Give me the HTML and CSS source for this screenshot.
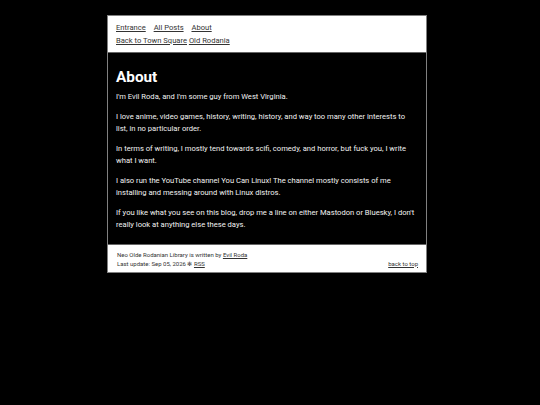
FILE: index.html
```html
<!DOCTYPE html>
<html>
<head>
<meta charset="utf-8">
<link rel="stylesheet" href="styles.css">
</head>
<body>
<div class="wrap">
  <header class="top">
    <nav class="nav">
      <a href="#">Entrance</a>
      <a href="#">All Posts</a>
      <a href="#">About</a>
    </nav>
    <nav class="nav nav2">
      <a href="#">Back to Town Square</a>
      <a href="#">Old Rodania</a>
    </nav>
  </header>
  <main class="main">
    <h1>About</h1>
    <p>I'm Evil Roda, and I'm some guy from West Virginia.</p>
    <p>I love anime, video games, history, writing, history, and way too many other interests to list, in no particular order.</p>
    <p>In terms of writing, I mostly tend towards scifi, comedy, and horror, but fuck you, I write what I want.</p>
    <p>I also run the YouTube channel You Can Linux! The channel mostly consists of me installing and messing around with Linux distros.</p>
    <p>If you like what you see on this blog, drop me a line on either Mastodon or Bluesky, I don't really look at anything else these days.</p>
  </main>
  <footer class="foot">
    <div class="foot-left">
      <div>Neo Olde Rodanian Library is written by <a href="#">Evil Roda</a></div>
      <div>Last update: Sep 05, 2026 <span class="dot">✻</span> <a href="#">RSS</a></div>
    </div>
    <a href="#" class="totop">back to top</a>
  </footer>
</div>
</body>
</html>
```
FILE: styles.css
```css
html, body {
  margin: 0;
  padding: 0;
  background: #000;
}
body {
  font-family: Roboto, "Liberation Sans", sans-serif;
  padding-top: 15px;
}
.wrap {
  width: 318px;
  margin-left: 107px;
  background: #fff;
  border: 1px solid #808080;
}
.top {
  padding: 6px 8px 5px;
  font-size: 7.6px;
  line-height: 12.5px;
}
.nav a {
  color: #333;
  margin-right: 6px;
}
.nav2 a {
  margin-right: 0;
}
.main {
  background: #000;
  color: #f2f2f2;
  border-top: 1px solid #666;
  border-bottom: 1px solid #666;
  padding: 15px 8px 12px;
  font-size: 7.6px;
  line-height: 12.5px;
}
.main h1 {
  font-size: 15.3px;
  line-height: 18px;
  margin: 0 0 5px;
  font-weight: 700;
  color: #fff;
}
.main p {
  margin: 0 0 7px;
}
.main p:last-child {
  margin-bottom: 0;
}
.foot {
  display: flex;
  justify-content: space-between;
  align-items: flex-end;
  padding: 5px 8px 4px 9px;
  font-size: 6px;
  line-height: 9px;
  color: #333;
}
.foot a {
  color: #333;
}
.dot {
  font-size: 6px;
}
```
